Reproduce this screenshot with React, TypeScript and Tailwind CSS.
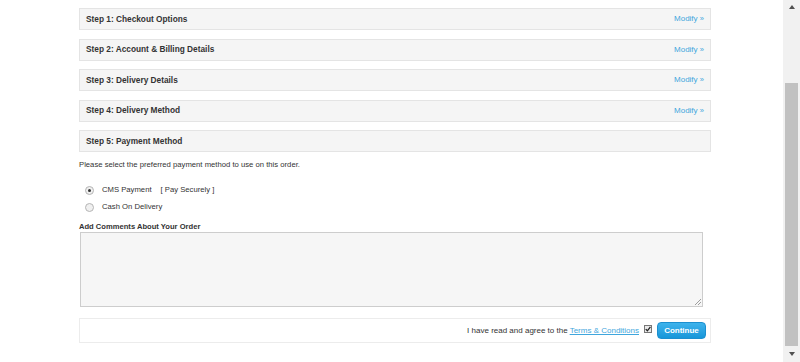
import React from "react";

const steps = [
  { title: "Step 1: Checkout Options", modify: true },
  { title: "Step 2: Account & Billing Details", modify: true },
  { title: "Step 3: Delivery Details", modify: true },
  { title: "Step 4: Delivery Method", modify: true },
  { title: "Step 5: Payment Method", modify: false },
];

function StepHeader({ title, modify }: { title: string; modify: boolean }) {
  return (
    <div className="flex h-[22px] items-center justify-between border border-[#e4e4e4] bg-[#f5f5f5] pl-[6px] pr-[6px]">
      <span className="text-[8.3px] font-bold text-[#333]">{title}</span>
      {modify ? (
        <a className="text-[8px] text-[#3fa6dd]" href="#">
          Modify <span className="text-[7.5px]">»</span>
        </a>
      ) : null}
    </div>
  );
}

function Radio({ checked }: { checked?: boolean }) {
  return (
    <span className="flex h-[9px] w-[9px] items-center justify-center rounded-full border border-[#b5b5b5] bg-[#f0f0f0]">
      {checked ? <span className="h-[3px] w-[3px] rounded-full bg-[#333]" /> : null}
    </span>
  );
}

function Scrollbar() {
  return (
    <div className="flex h-[362px] w-[17px] shrink-0 flex-col items-center bg-[#f1f1f1]">
      <div className="flex h-[14px] items-center">
        <span className="h-0 w-0 border-x-[3.5px] border-b-[4px] border-x-transparent border-b-[#505050]" />
      </div>
      <div className="h-[69px]" />
      <div className="h-[263px] w-[13px] bg-[#c1c1c1]" />
      <div className="flex flex-1 items-center">
        <span className="h-0 w-0 border-x-[3.5px] border-t-[4px] border-x-transparent border-t-[#505050]" />
      </div>
    </div>
  );
}

export default function App() {
  return (
    <div
      className="flex h-[362px] w-[800px] overflow-hidden bg-white text-[#333]"
      style={{ fontFamily: '"Liberation Sans", Arial, sans-serif' }}
    >
      <div className="flex-1 pl-[79px] pt-[8px]">
        <div className="w-[632px]">
          <div className="flex flex-col gap-[8.5px]">
            {steps.map((step) => (
              <StepHeader key={step.title} title={step.title} modify={step.modify} />
            ))}
          </div>

          <p className="mt-[8px] text-[7.7px] leading-[10px]">
            Please select the preferred payment method to use on this order.
          </p>

          <div className="mt-[15px] flex flex-col gap-[7px] pl-[6px] text-[7.7px]">
            <label className="flex h-[10px] items-center">
              <Radio checked />
              <span className="ml-[8px]">CMS Payment</span>
              <span className="ml-[9px]">[ Pay Securely ]</span>
            </label>
            <label className="flex h-[10px] items-center">
              <Radio />
              <span className="ml-[8px]">Cash On Delivery</span>
            </label>
          </div>

          <div className="mt-[10px] text-[7.6px] font-bold leading-[10px]">
            Add Comments About Your Order
          </div>
          <div className="relative ml-[1px] h-[75px] w-[623px] border border-[#cdcdcd] bg-[#f6f6f6]">
            <svg
              className="absolute bottom-[1px] right-[1px]"
              width="6"
              height="6"
              viewBox="0 0 6 6"
            >
              <path d="M6 0 L0 6 M6 3 L3 6" stroke="#888" strokeWidth="0.8" />
            </svg>
          </div>

          <div className="mt-[11px] flex h-[25px] items-center justify-end border border-[#ececec] bg-white pr-[4px] text-[8px]">
            <span>I have read and agree to the</span>
            <a className="ml-[2px] text-[#3fa6dd] underline" href="#">
              Terms &amp; Conditions
            </a>
            <span className="ml-[5px] mb-[3px] flex h-[8px] w-[8px] items-center justify-center border border-[#777] bg-[#eaeaea]">
              <svg width="6" height="6" viewBox="0 0 5 5">
                <path d="M0.6 2.6 L2 4 L4.5 0.8" stroke="#222" strokeWidth="1.1" fill="none" />
              </svg>
            </span>
            <button
              type="button"
              className="ml-[5px] h-[17px] w-[49px] rounded-[4px] border border-[#1c8fcf] bg-gradient-to-b from-[#3db3ec] to-[#1596d9] text-[8px] font-bold text-white"
            >
              Continue
            </button>
          </div>
        </div>
      </div>
      <Scrollbar />
    </div>
  );
}
